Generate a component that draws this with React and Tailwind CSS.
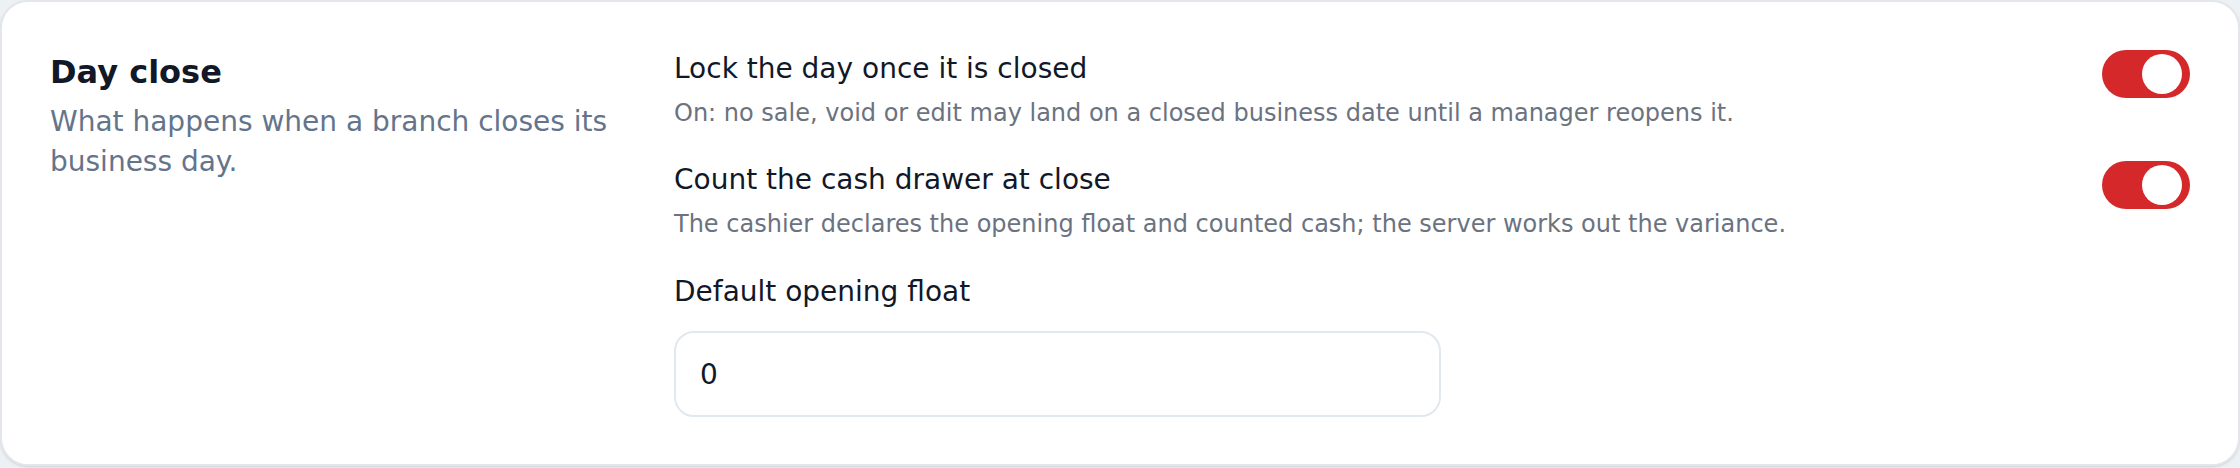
import { useState } from 'react'

const Toggle = ({ on, onChange }) => (
  <button
    type="button"
    onClick={() => onChange(!on)}
    className={`mt-[2px] flex h-[48px] w-[88px] shrink-0 items-center rounded-full px-[8px] ${
      on ? 'justify-end bg-[#d5282b]' : 'justify-start bg-[#d1d5db]'
    }`}
  >
    <span className="h-[40px] w-[40px] rounded-full bg-white" />
  </button>
)

const SettingRow = ({ label, hint, on, onChange }) => (
  <div className="flex items-start justify-between gap-8">
    <div>
      <div className="text-[28px] leading-[42px] text-[#111827]">{label}</div>
      <p className="mt-[6px] text-[24px] leading-[35px] text-[#6b7280]">{hint}</p>
    </div>
    <Toggle on={on} onChange={onChange} />
  </div>
)

const App = () => {
  const [lockDay, setLockDay] = useState(true)
  const [countCash, setCountCash] = useState(true)
  const [openingFloat, setOpeningFloat] = useState('0')

  return (
    <div className="min-h-screen bg-[#eef1f4] font-['DejaVu_Sans',sans-serif]">
      {/* Day close card */}
      <div className="flex gap-[64px] rounded-[28px] border-2 border-[#e3e7ec] bg-white px-[48px] pb-[47px] pt-[46px] shadow-sm">
        <div className="w-[560px] shrink-0">
          <h2 className="text-[32px] font-bold leading-[49px] text-[#111827]">Day close</h2>
          <p className="mt-[5px] text-[28px] leading-[40px] text-[#64748b]">
            What happens when a branch closes its business day.
          </p>
        </div>

        <div className="flex flex-1 flex-col gap-[28px]">
          <SettingRow
            label="Lock the day once it is closed"
            hint="On: no sale, void or edit may land on a closed business date until a manager reopens it."
            on={lockDay}
            onChange={setLockDay}
          />
          <SettingRow
            label="Count the cash drawer at close"
            hint="The cashier declares the opening float and counted cash; the server works out the variance."
            on={countCash}
            onChange={setCountCash}
          />
          <div className="pt-[1px]">
            <label className="block text-[28px] leading-[42px] text-[#111827]">Default opening float</label>
            <input
              type="text"
              value={openingFloat}
              onChange={(e) => setOpeningFloat(e.target.value)}
              className="mt-[18px] h-[86px] w-[767px] rounded-[20px] border-2 border-[#e2e8f0] bg-white px-[24px] text-[28px] text-[#111827] outline-none"
            />
          </div>
        </div>
      </div>
    </div>
  )
}

export default App
